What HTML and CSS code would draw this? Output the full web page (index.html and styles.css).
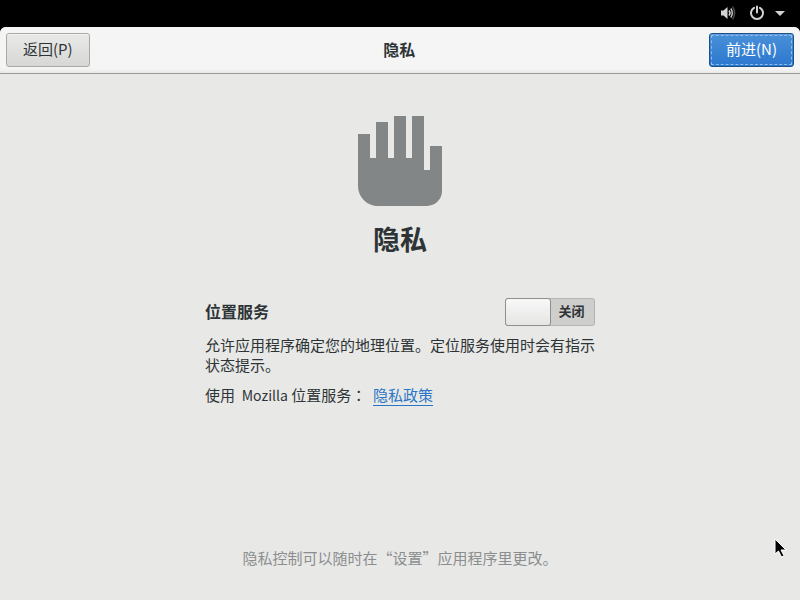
FILE: index.html
```html
<!DOCTYPE html>
<html lang="zh-CN">
<head>
<meta charset="utf-8">
<meta name="viewport" content="width=device-width, initial-scale=1">
<title>隐私</title>
<link rel="stylesheet" href="styles.css">
</head>
<body>
<div class="panel">
  <button class="status" type="button" aria-label="系统菜单">
    <svg width="16" height="16" viewBox="0 0 16 16" aria-hidden="true">
      <path d="M1 5.500h2.500L7.500 2v12L3.500 10.500H1z" fill="#d2d2d2"/>
      <path d="M9 5.500q2 2.500 0 5" fill="none" stroke="#d2d2d2" stroke-width="1.500"/>
      <path d="M10.800 3.500q3 4.500 0 9" fill="none" stroke="#c4c4c4" stroke-width="1.500"/>
      <path d="M12.600 1.700q4 6.300 0 12.600" fill="none" stroke="#4c4c4c" stroke-width="1.500"/>
    </svg>
    <svg width="16" height="16" viewBox="0 0 16 16" aria-hidden="true">
      <path d="M5 2.800a6 6 0 1 0 6 0M8 1.500v6" fill="none" stroke="#d2d2d2" stroke-width="2" stroke-linecap="round"/>
    </svg>
    <svg width="10" height="16" viewBox="0 0 10 16" aria-hidden="true">
      <path d="M0 6h10L5 11z" fill="#d2d2d2"/>
    </svg>
  </button>
</div>
<div class="window">
  <header class="header">
    <button class="btn" type="button">返回(P)</button>
    <div class="header-title">隐私</div>
    <button class="btn btn-primary" type="button">前进(N)</button>
  </header>
  <main class="page">
    <svg class="hand" width="86" height="92" viewBox="0 0 86 92" aria-hidden="true">
      <path d="M1 19h12v24h6V7h12v36h6V1h12v42h6V1h12v54h6V31h12v45a15 15 0 0 1-15 15H21A20 20 0 0 1 1 71z" fill="#828686"/>
    </svg>
    <h1>隐私</h1>
    <section class="settings">
      <div class="setting">
        <label class="setting-name" for="location">位置服务</label>
        <label class="switch"><input type="checkbox" role="switch" id="location"><span class="switch-text">关闭</span></label>
      </div>
      <p class="about">允许应用程序确定您的地理位置。定位服务使用时会有指示状态提示。</p>
      <p class="provider">使用&nbsp; <span class="latin">Mozilla</span> 位置服务<span class="colon" lang="zh-TW">：</span>&nbsp; <a href="#policy">隐私政策</a></p>
    </section>
    <footer>隐私控制可以随时在“设置”应用程序里更改。</footer>
  </main>
</div>
<svg class="pointer" width="14" height="21" viewBox="0 0 14 21" aria-hidden="true">
  <path d="M1 1v15l3.500-3 3 6 2.500-1.200-3-5.800H12z" fill="#000" stroke="#fff" stroke-width="1"/>
</svg>
</body>
</html>
```
FILE: styles.css
```css
* {
  box-sizing: border-box;
}

body {
  margin: 0;
  min-height: 100vh;
  display: flex;
  flex-direction: column;
  background: #000;
  color: #2e3436;
  font: 15px/20px "Noto Sans CJK SC", sans-serif;
}

button {
  font: inherit;
}

.panel {
  height: 27px;
  display: flex;
  justify-content: flex-end;
  align-items: center;
  padding: 0 15px 2px 0;
}

.status {
  display: flex;
  gap: 13px;
  padding: 0;
  border: 0;
  background: none;
}

.status svg + svg {
  margin-left: 0;
}

.status svg:last-child {
  margin-left: -3px;
}

.window {
  flex: 1;
  display: flex;
  flex-direction: column;
  overflow: hidden;
  border-radius: 6px 6px 0 0;
  background: #e8e8e6;
}

.header {
  display: flex;
  justify-content: space-between;
  align-items: center;
  height: 47px;
  padding: 0 6px;
  border-bottom: 1px solid #9a9b95;
  background: linear-gradient(#f5f5f5 90%, #e9e9e7);
}

.header-title {
  padding-bottom: 3px;
  font-size: 16px;
  font-weight: 700;
}

.btn {
  height: 34px;
  padding: 0 16px 2px;
  border: 1px solid #a8a8a5;
  border-radius: 3px;
  background: linear-gradient(#e9e9e8, #d7d7d5);
  box-shadow: inset 0 1px #f2f2f2;
  color: #2e3436;
}

.btn-primary {
  border-color: #1c5187;
  background: linear-gradient(#4a90d9, #2c78cf);
  box-shadow: inset 0 1px #5f9fdf;
  outline: 1px dashed #8fbbea;
  outline-offset: -3px;
  color: #fff;
}

.page {
  flex: 1;
  display: flex;
  flex-direction: column;
  align-items: center;
  padding: 41px 20px 32px;
}

.hand {
  flex: none;
}

h1 {
  margin: 12px 0 39px;
  font-size: 27px;
  line-height: 40px;
}

.settings {
  width: 100%;
  max-width: 390px;
}

.setting {
  display: flex;
  justify-content: space-between;
  align-items: center;
}

.setting-name {
  padding-bottom: 3px;
  font-size: 16px;
  font-weight: 700;
}

.switch {
  display: flex;
  align-items: center;
  width: 90px;
  height: 28px;
  border: 1px solid #b4b4b1;
  border-radius: 3px;
  background: #cececc;
}

.switch input {
  appearance: none;
  flex: none;
  width: 46px;
  height: 28px;
  margin: 0 0 0 -1px;
  border: 1px solid #8f8f8c;
  border-radius: 3px;
  background: linear-gradient(#f8f8f8, #e5e5e4);
}

.switch-text {
  flex: 1;
  padding: 0 2px 2px 0;
  text-align: center;
  font-size: 13px;
  font-weight: 700;
}

.about {
  margin: 9px 0 0;
}

.provider {
  margin: 10px 0 0;
}

.latin {
  font-size: 14px;
}

.colon {
  font-family: "Noto Sans CJK TC", sans-serif;
}

a {
  display: inline-block;
  border-bottom: 1px solid #2a76c6;
  color: #2a76c6;
  text-decoration: none;
}

footer {
  margin-top: auto;
  color: #8b8e8f;
}

.pointer {
  position: absolute;
  left: 774px;
  top: 538px;
}
```
